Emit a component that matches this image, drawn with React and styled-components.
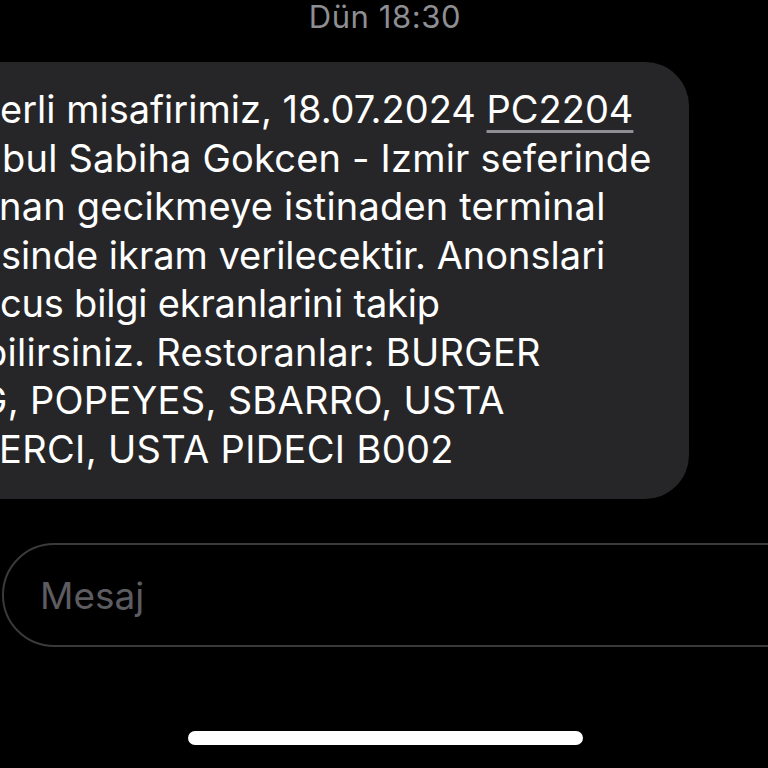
import React from "react";
import styled, { createGlobalStyle } from "styled-components";

const Global = createGlobalStyle`
  html, body {
    margin: 0;
    padding: 0;
    background: #000;
    overflow: hidden;
  }
  body {
    width: 768px;
    height: 768px;
    font-family: Inter, "Noto Sans", "Liberation Sans", sans-serif;
    -webkit-font-smoothing: antialiased;
  }
`;

const Screen = styled.div`
  width: 768px;
  height: 768px;
  display: flex;
  flex-direction: column;
  overflow: hidden;
  background: #000;
`;

const Stamp = styled.div`
  height: 34px;
  line-height: 34px;
  text-align: center;
  color: #8e8e93;
  font-size: 31px;
  letter-spacing: 0.6px;
  transform: translateX(1px);
`;

const MessageRow = styled.div`
  display: flex;
  margin-top: 28px;
`;

const Bubble = styled.div`
  margin-left: -60px;
  width: 749px;
  box-sizing: border-box;
  padding: 23px 0 26px 60px;
  background: #262628;
  border-radius: 44px;
  color: #fff;
  font-size: 38px;
  line-height: 48.5px;
  overflow: hidden;
`;

const Line = styled.div`
  white-space: nowrap;
  margin-left: ${(p) => p.$x}px;
  letter-spacing: ${(p) => p.$ls || 0}px;
`;

const Link = styled.span`
  text-decoration: underline;
  text-decoration-color: #8e8e93;
  text-decoration-thickness: 3px;
  text-underline-offset: 7px;
`;

const Composer = styled.div`
  margin: 44px -80px 0 2px;
  height: 104px;
  box-sizing: border-box;
  border: 2px solid #3a3a3c;
  border-radius: 52px;
  display: flex;
  align-items: center;
  padding-left: 36px;
`;

const Placeholder = styled.span`
  color: #5c5c61;
  font-size: 37px;
`;

const HomeBar = styled.div`
  margin: 84px auto 0;
  width: 395px;
  height: 14px;
  border-radius: 7px;
  background: #fff;
  transform: translateX(1px);
`;

const lines = [
  { x: 0, text: <>erli misafirimiz, 18.07.2024 <Link>PC2204</Link></> },
  { x: 2, ls: 0.2, text: "bul Sabiha Gokcen - Izmir seferinde" },
  { x: -1, ls: 0.2, text: "nan gecikmeye istinaden terminal" },
  { x: 1, text: "sinde ikram verilecektir. Anonslari" },
  { x: 0, ls: -0.2, text: "cus bilgi ekranlarini takip" },
  { x: -16, ls: 0.3, text: "bilirsiniz. Restoranlar: BURGER" },
  { x: -21, ls: 0.3, text: "G, POPEYES, SBARRO, USTA" },
  { x: -1, ls: 0.35, text: "ERCI, USTA PIDECI B002" },
];

export default function App() {
  return (
    <>
      <Global />
      <Screen>
        <Stamp>Dün 18:30</Stamp>
        <MessageRow>
          <Bubble>
            {lines.map((l, i) => (
              <Line key={i} $x={l.x} $ls={l.ls}>
                {l.text}
              </Line>
            ))}
          </Bubble>
        </MessageRow>
        <Composer>
          <Placeholder>Mesaj</Placeholder>
        </Composer>
        <HomeBar />
      </Screen>
    </>
  );
}
